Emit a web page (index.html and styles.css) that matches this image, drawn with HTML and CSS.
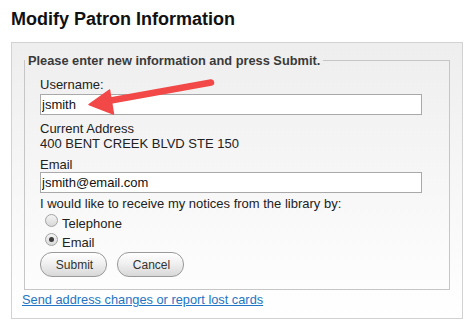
FILE: index.html
```html
<!DOCTYPE html>
<html>
<head>
<meta charset="utf-8">
<title>Modify Patron Information</title>
<link rel="stylesheet" href="styles.css">
</head>
<body>
<div class="page">
  <h1 class="title">Modify Patron Information</h1>
  <div class="panel">
    <fieldset class="form-set">
      <legend class="legend">Please enter new information and press Submit.</legend>
      <div class="form-body">
        <label class="label" for="username">Username:</label>
        <input class="field field-user" id="username" type="text" value="jsmith">
        <div class="address">
          <div>Current Address</div>
          <div>400 BENT CREEK BLVD STE 150</div>
        </div>
        <label class="label label-email" for="email">Email</label>
        <input class="field" id="email" type="text" value="jsmith@email.com">
        <div class="notice">I would like to receive my notices from the library by:</div>
        <label class="radio-row"><input class="radio" type="radio" name="notice"><span>Telephone</span></label>
        <label class="radio-row"><input class="radio" type="radio" name="notice" checked><span>Email</span></label>
        <div class="buttons">
          <button class="btn" type="button">Submit</button>
          <button class="btn" type="button">Cancel</button>
        </div>
      </div>
    </fieldset>
    <a class="link" href="#">Send address changes or report lost cards</a>
  </div>
  <svg class="arrow" width="474" height="325" viewBox="0 0 474 325" aria-hidden="true">
    <line x1="211" y1="82.5" x2="108" y2="101" stroke="#f24848" stroke-width="6.5" stroke-linecap="round"/>
    <path d="M89 104.5 L109.5 90 L113.5 114 Z" fill="#f24848" stroke="#f24848" stroke-width="1.5" stroke-linejoin="round"/>
  </svg>
</div>
</body>
</html>
```
FILE: styles.css
```css
html, body {
  margin: 0;
  padding: 0;
  background: #fff;
}

.page {
  position: relative;
  width: 474px;
  height: 325px;
  padding: 8px 12px 0 11px;
  box-sizing: border-box;
  font-family: "Liberation Sans", Arial, sans-serif;
  color: #222;
}

.title {
  margin: 0;
  font-size: 18px;
  line-height: 22px;
  font-weight: bold;
  color: #111;
}

.panel {
  margin-top: 12px;
  width: 452px;
  box-sizing: border-box;
  border: 1px solid #d2d2d2;
  background: linear-gradient(to bottom, #eeeeee 0%, #ffffff 100%);
  padding: 10px 10px 10px 10px;
}

.form-set {
  margin: 0 2px;
  padding: 0 0 12px 0;
  border: 1px solid #c6c6c6;
  min-width: 0;
}

.legend {
  padding: 0 3px;
  margin-left: 0;
  font-size: 12.8px;
  line-height: 15px;
  font-weight: bold;
  color: #3a3a3a;
}

.form-body {
  padding: 9px 0 0 15px;
  display: flex;
  flex-direction: column;
  align-items: flex-start;
  font-size: 13px;
  line-height: 15px;
}

.label {
  display: block;
}

.field {
  margin: 2px 0 0 0;
  width: 382px;
  height: 21px;
  box-sizing: border-box;
  border: 1px solid #a9a9a9;
  background: #fff;
  padding: 0 1px;
  font-family: "Liberation Sans", Arial, sans-serif;
  font-size: 13px;
  color: #111;
  outline: none;
}

.address {
  margin-top: 6px;
}

.label-email {
  margin-top: 6px;
}

.label-email + .field {
  margin-top: 0;
}

.notice {
  margin-top: 3px;
  margin-bottom: 2px;
}

.radio-row {
  display: flex;
  align-items: center;
  height: 19px;
}

.radio-row span {
  position: relative;
  top: 1px;
}

.radio {
  -webkit-appearance: none;
  appearance: none;
  margin: 0 4px 0 5px;
  width: 13px;
  height: 13px;
  border-radius: 50%;
  border: 1px solid #a3a3a3;
  background: linear-gradient(to bottom, #f4f4f4, #d9d9d9);
  box-sizing: border-box;
  position: relative;
  top: -2px;
}

.radio:checked::after {
  content: "";
  position: absolute;
  left: 3px;
  top: 3px;
  width: 5px;
  height: 5px;
  border-radius: 50%;
  background: #3d3d3d;
}

.buttons {
  display: flex;
  gap: 10px;
  margin-top: 1px;
}

.btn {
  width: 67px;
  height: 25px;
  border: 1px solid #9a9a9a;
  border-radius: 12px;
  background: linear-gradient(to bottom, #ffffff 0%, #f0f0f0 45%, #d8d8d8 100%);
  font-family: "Liberation Sans", Arial, sans-serif;
  font-size: 12px;
  color: #333;
  padding: 0 0 0 2px;
}

.link {
  display: inline-block;
  font-size: 12.8px;
  line-height: 15px;
  color: #1f74c4;
  text-decoration: underline;
}

.arrow {
  position: absolute;
  left: 0;
  top: 0;
  pointer-events: none;
}
```
